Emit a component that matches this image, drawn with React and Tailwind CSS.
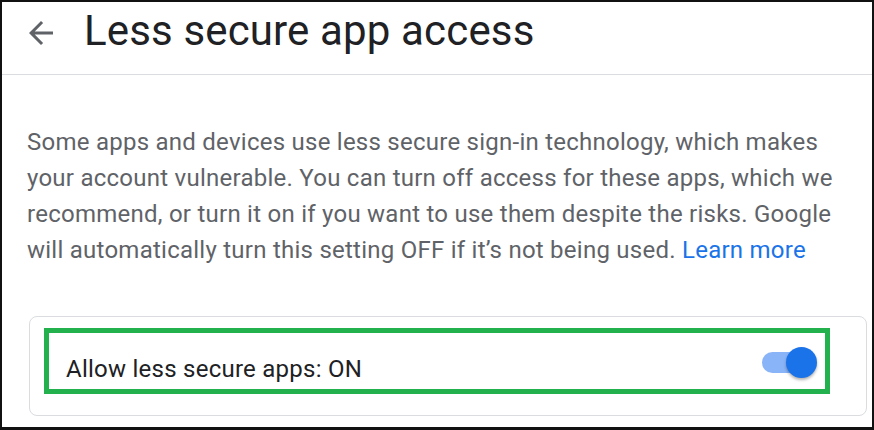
export default function App() {
  return (
    <div className="w-[874px] h-[430px] box-border overflow-hidden bg-white border-t-2 border-l-2 border-r-2 border-b-[3px] border-[#111111] font-['Roboto','Liberation_Sans',sans-serif]">
      <div className="h-[72px] box-content border-b border-[#dadce0] flex items-start">
        <svg className="ml-[21px] mt-[13px] w-[36px] h-[36px] shrink-0" viewBox="0 0 24 24" fill="#5f6368">
          <path d="M20 11H7.83l5.59-5.59L12 4l-8 8 8 8 1.41-1.41L7.83 13H20v-2z" />
        </svg>
        <h1 className="ml-[25px] mt-[5px] text-[42px] leading-[48px] tracking-[0.15px] text-[#202124] font-normal whitespace-nowrap">
          Less secure app access
        </h1>
      </div>
      <div className="pl-[25px] pt-[49px] text-[24px] leading-[36px] tracking-[0.25px] text-[#5f6368] whitespace-nowrap">
        <div>Some apps and devices use less secure sign-in technology, which makes</div>
        <div>your account vulnerable. You can turn off access for these apps, which we</div>
        <div>recommend, or turn it on if you want to use them despite the risks. Google</div>
        <div>
          will automatically turn this setting OFF if it’s not being used.{" "}
          <span className="text-[#1a73e8]">Learn more</span>
        </div>
      </div>
      <div className="ml-[27px] mt-[48px] w-[838px] h-[100px] rounded-[8px] border border-[#dadce0] pt-[11px] pl-[14px]">
        <div className="w-[786px] h-[66px] border-[5px] border-[#22b14c] flex items-start justify-between pl-[17px] pr-[8px]">
          <span className="mt-[23px] text-[24px] leading-[26px] tracking-[0.25px] text-[#202124] whitespace-nowrap">
            Allow less secure apps: ON
          </span>
          <div className="relative mt-[14px] w-[55px] h-[31px] shrink-0">
            <div className="absolute left-0 top-[5px] w-[54px] h-[21px] rounded-full bg-[#8ab4f8]" />
            <div className="absolute right-0 top-0 w-[31px] h-[31px] rounded-full bg-[#1a73e8] shadow-[0_2px_3px_rgba(0,0,0,0.3)]" />
          </div>
        </div>
      </div>
    </div>
  );
}
